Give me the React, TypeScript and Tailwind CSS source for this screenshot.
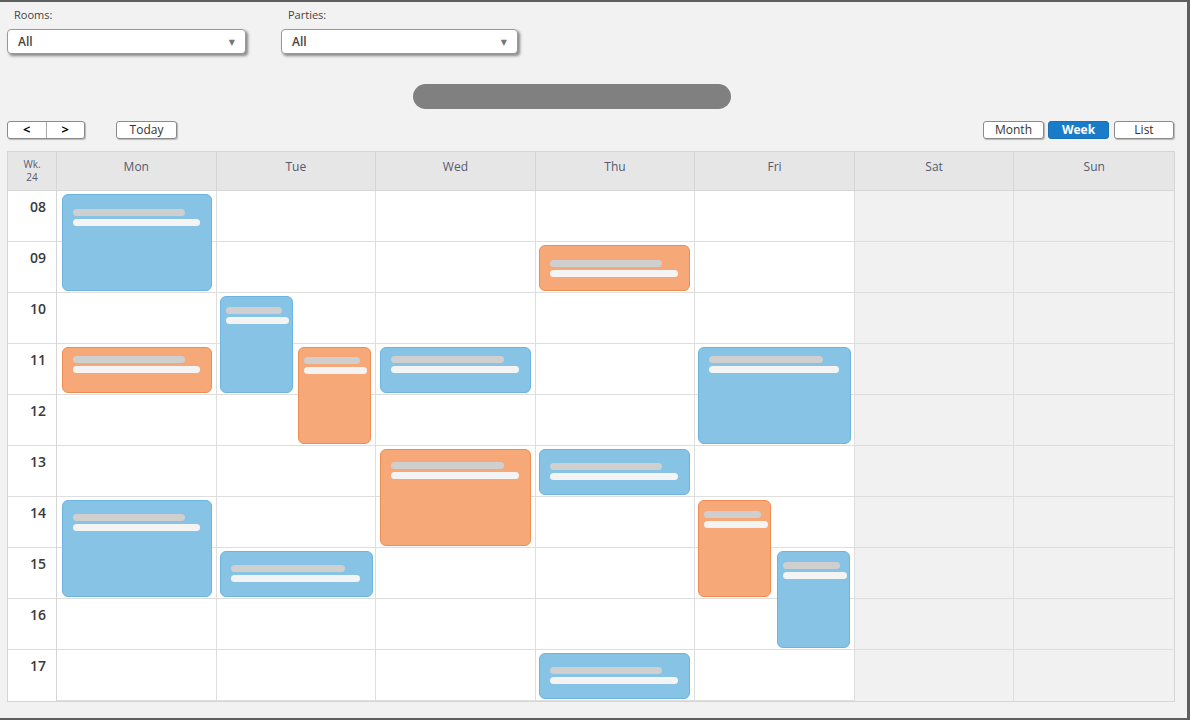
import React from "react";

type Ev = {
	day: number;
	start: number;
	hours: number;
	color: "blue" | "orange";
	left: number;
	width: number;
	pt: number;
	half?: boolean;
};

const days = ["Mon", "Tue", "Wed", "Thu", "Fri", "Sat", "Sun"];
const hours = ["08", "09", "10", "11", "12", "13", "14", "15", "16", "17"];

const events: Ev[] = [
	{ day: 0, start: 0, hours: 2, color: "blue", left: 5, width: 150, pt: 14 },
	{ day: 3, start: 1, hours: 1, color: "orange", left: 3, width: 151, pt: 14 },
	{ day: 1, start: 2, hours: 2, color: "blue", left: 3, width: 73, pt: 10, half: true },
	{ day: 0, start: 3, hours: 1, color: "orange", left: 5, width: 150, pt: 8 },
	{ day: 1, start: 3, hours: 2, color: "orange", left: 81, width: 73, pt: 9, half: true },
	{ day: 2, start: 3, hours: 1, color: "blue", left: 4, width: 151, pt: 8 },
	{ day: 4, start: 3, hours: 2, color: "blue", left: 3, width: 153, pt: 8 },
	{ day: 2, start: 5, hours: 2, color: "orange", left: 4, width: 151, pt: 12 },
	{ day: 3, start: 5, hours: 1, color: "blue", left: 3, width: 151, pt: 13 },
	{ day: 0, start: 6, hours: 2, color: "blue", left: 5, width: 150, pt: 13 },
	{ day: 1, start: 7, hours: 1, color: "blue", left: 3, width: 153, pt: 13 },
	{ day: 4, start: 6, hours: 2, color: "orange", left: 3, width: 73, pt: 10, half: true },
	{ day: 4, start: 7, hours: 2, color: "blue", left: 82, width: 73, pt: 10, half: true },
	{ day: 3, start: 9, hours: 1, color: "blue", left: 3, width: 151, pt: 13 },
];

const Select = ({ label, width }: { label: string; width: string }) => (
	<div className="flex flex-col">
		<span className="text-[11px] text-[#444] pl-[7px] mb-[9px] leading-none">{label}</span>
		<div
			className={`${width} h-[25px] bg-white border border-[#9a9a9a] rounded-[4px] shadow-[2px_2px_3px_rgba(0,0,0,0.45)] flex items-center justify-between pl-[10px] pr-[10px]`}
		>
			<span className="text-[12px] font-semibold text-[#444]">All</span>
			<span className="text-[8px] text-[#777]">▼</span>
		</div>
	</div>
);

const Btn = ({ children, className = "" }: { children: React.ReactNode; className?: string }) => (
	<button
		className={`h-[18px] border border-[#8a8a8a] bg-white rounded-[3px] text-[12px] text-[#333] leading-none flex items-center justify-center shadow-[1px_1px_1px_rgba(0,0,0,0.25)] ${className}`}
	>
		{children}
	</button>
);

const App = () => {
	return (
		<div
			className="w-[1190px] h-[720px] bg-[#f2f2f2] border-t-2 border-r-[3px] border-b-2 border-[#5e5e5e] overflow-hidden"
			style={{ fontFamily: '"Open Sans", "DejaVu Sans", sans-serif' }}
		>
			{/* filters */}
			<div className="flex gap-[35px] pt-[7px] pl-[7px]">
				<Select label="Rooms:" width="w-[239px]" />
				<Select label="Parties:" width="w-[237px]" />
			</div>

			{/* loading bar */}
			<div className="flex justify-center mt-[30px]">
				<div className="ml-[-44px] w-[318px] h-[25px] rounded-full bg-[#808080]" />
			</div>

			{/* toolbar */}
			<div className="flex items-center justify-between pl-[7px] pr-[13px] mt-[12px]">
				<div className="flex items-center gap-[31px]">
					<div className="flex h-[18px] w-[78px] border border-[#8a8a8a] rounded-[3px] bg-white shadow-[1px_1px_1px_rgba(0,0,0,0.25)]">
						<span className="flex-1 flex items-center justify-center text-[13px] font-bold text-black border-r border-[#aaa]">&lt;</span>
						<span className="flex-1 flex items-center justify-center text-[13px] font-bold text-black">&gt;</span>
					</div>
					<Btn className="w-[61px]">Today</Btn>
				</div>
				<div className="flex items-center gap-[4px]">
					<Btn className="w-[61px]">Month</Btn>
					<button className="h-[18px] w-[61px] rounded-[3px] bg-[#1a7cc9] border border-[#1a6fb5] text-white text-[12px] font-bold leading-none">
						Week
					</button>
					<Btn className="w-[60px] ml-[1px]">List</Btn>
				</div>
			</div>

			{/* calendar */}
			<div className="ml-[7px] mt-[12px] w-[1168px] border border-[#d6d6d6] bg-white">
				<div className="grid grid-cols-[49px_repeat(7,1fr)] h-[39px] bg-[#e6e6e6] border-b border-[#d6d6d6]">
					<div className="flex flex-col items-center justify-center text-[10px] leading-[13px] text-[#555a70] border-r border-[#d6d6d6]">
						<span>Wk.</span>
						<span>24</span>
					</div>
					{days.map((d) => (
						<div
							key={d}
							className="flex justify-center pt-[6px] text-[12px] text-[#555a70] border-r border-[#d6d6d6] last:border-r-0"
						>
							{d}
						</div>
					))}
				</div>
				<div className="grid grid-cols-[49px_repeat(7,1fr)]">
					<div className="border-r border-[#d6d6d6]">
						{hours.map((h) => (
							<div
								key={h}
								className="h-[51px] border-b border-[#dedede] last:border-b-0 text-right pr-[10px] pt-[5px] text-[14px] font-semibold text-[#3a3a3a]"
							>
								{h}
							</div>
						))}
					</div>
					{days.map((d, di) => (
						<div
							key={d}
							className={`relative border-r border-[#dedede] last:border-r-0 ${di >= 5 ? "bg-[#f1f1f1]" : "bg-white"}`}
						>
							{hours.map((h) => (
								<div key={h} className="h-[51px] border-b border-[#dedede] last:border-b-0" />
							))}
							{events
								.filter((e) => e.day === di)
								.map((e, i) => (
									<div
										key={i}
										className={`absolute rounded-[6px] border ${
											e.color === "blue"
												? "bg-[#86c3e4] border-[#6db4de]"
												: "bg-[#f6a878] border-[#ee8d52]"
										} ${e.half ? "pl-[5px]" : "pl-[10px]"}`}
										style={{
											top: e.start * 51 + 3,
											height: e.hours * 51 - 5,
											left: e.left,
											width: e.width,
											paddingTop: e.pt,
										}}
									>
										<div className={`h-[7px] rounded-full bg-[#cfcfcf] ${e.half ? "w-[86%]" : "w-[81%]"}`} />
										<div className={`h-[7px] rounded-full bg-[#f4f4f4] mt-[3px] ${e.half ? "w-[96%]" : "w-[92%]"}`} />
									</div>
								))}
						</div>
					))}
				</div>
			</div>
		</div>
	);
};

export default App;
